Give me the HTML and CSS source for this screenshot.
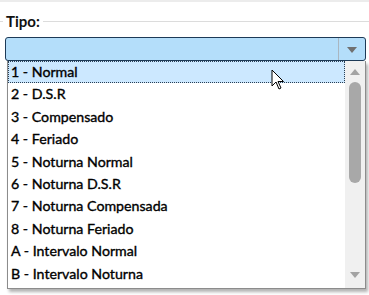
FILE: index.html
```html
<!DOCTYPE html>
<html lang="pt">
<head>
  <meta charset="UTF-8"/>
  <title>Tipo</title>
  <link rel="stylesheet" href="styles.css">
</head>
<body>
<div class="page">
  <div class="legend">
    <span class="rule short"></span>
    <span class="label">Tipo:</span>
    <span class="rule"></span>
  </div>

  <!-- Combo -->
  <div class="combo">
    <div class="combo-value"></div>
    <div class="combo-btn"><span class="tri"></span></div>
  </div>

  <!-- Open list -->
  <div class="dropdown">
    <ul class="options">
      <li class="selected">1 - Normal</li>
      <li>2 - D.S.R</li>
      <li>3 - Compensado</li>
      <li>4 - Feriado</li>
      <li>5 - Noturna Normal</li>
      <li>6 - Noturna D.S.R</li>
      <li>7 - Noturna Compensada</li>
      <li>8 - Noturna Feriado</li>
      <li>A - Intervalo Normal</li>
      <li>B - Intervalo Noturna</li>
    </ul>
    <div class="scrollbar">
      <span class="arrow up"></span>
      <span class="thumb"></span>
      <span class="spacer"></span>
      <span class="arrow down"></span>
    </div>
  </div>

  <svg class="cursor" width="14" height="22" viewBox="0 0 14 22">
    <path d="M1 1 L1 17 L5 13 L8 20 L10 19 L7 12.5 L12.5 12.5 Z" fill="#fff" stroke="#000" stroke-width="1" stroke-linejoin="round"/>
  </svg>
</div>
</body>
</html>
```

FILE: styles.css
```css
*{margin:0;padding:0;box-sizing:border-box}
body{background:#fff;font-family:Lato,"Open Sans",Arial,sans-serif;color:#000}
.page{position:relative;width:369px;height:295px;overflow:hidden;border-top:2px solid #ececec}

.legend{display:flex;align-items:center;gap:3px;height:35px;padding-top:3px}
.rule{flex:1;height:1px;background:#dcdcdc}
.rule.short{flex:0 0 3px}
.label{font-weight:700;font-size:15px;color:#111}

.combo{display:flex;margin-left:5px;width:361px;height:24px;border:1px solid #1d3a57;border-radius:3px;background:#b4defa}
.combo-value{flex:1}
.combo-btn{width:27px;border-left:1px solid #a9b6c0;display:flex;align-items:center;justify-content:center}
.tri{width:0;height:0;border-left:5px solid transparent;border-right:5px solid transparent;border-top:6px solid #707070;margin-top:2px}

.dropdown{position:absolute;left:7px;top:59px;width:359px;height:228px;display:flex;background:#fff;border:1px solid #8c8c8c;border-top:none;box-shadow:2px 3px 3px rgba(0,0,0,.3)}
.options{flex:1;list-style:none}
.options li{height:22.4px;line-height:20.5px;padding-left:2px;font-size:14.2px;border:1px solid transparent;-webkit-text-stroke:0.35px #000}
.options li.selected{background:#cce8ff;border:1px dotted #2a3f55}

.scrollbar{width:20px;background:#f0f0f0;display:flex;flex-direction:column;align-items:center}
.arrow{width:0;height:0;border-left:5px solid transparent;border-right:5px solid transparent}
.arrow.up{border-bottom:6px solid #a3a3a3;margin-top:8px}
.arrow.down{border-top:6px solid #a3a3a3;margin-bottom:10px}
.thumb{width:12px;height:101px;margin-top:7px;border-radius:6px;background:#a8a8a8}
.spacer{flex:1}

.cursor{position:absolute;left:271px;top:67px}
```
